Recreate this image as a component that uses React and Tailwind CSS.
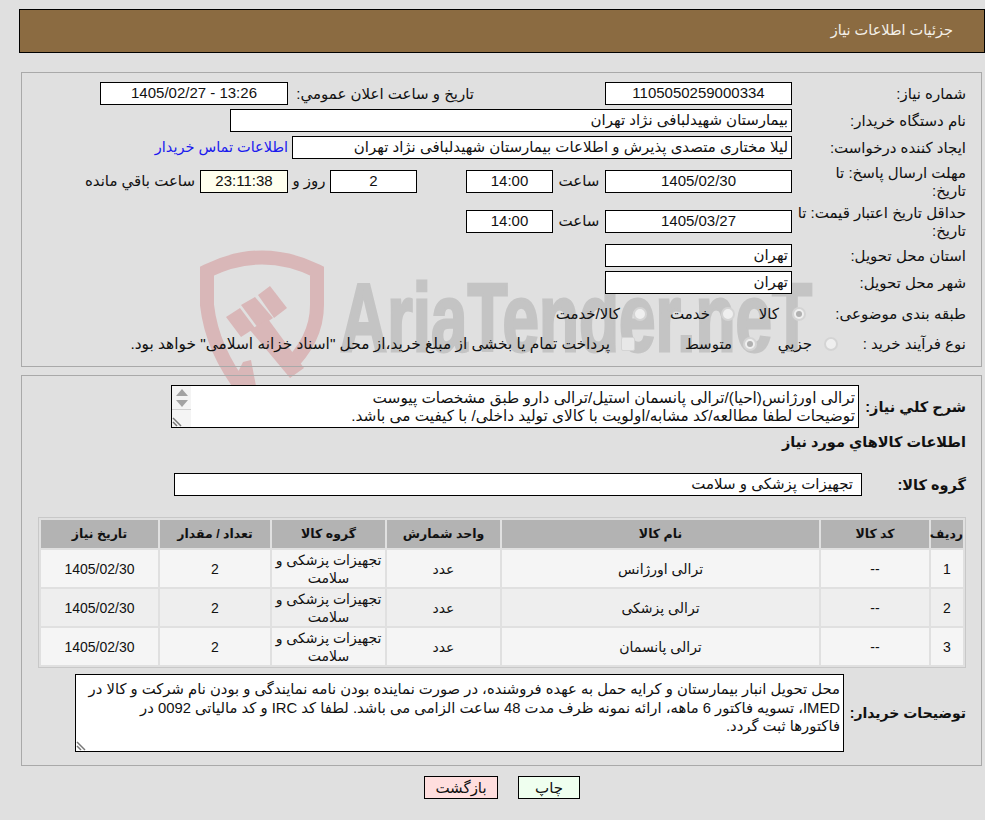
import React from "react";

const Box = ({ className = "", bg = "bg-white", children }) => (
  <div className={`h-full border border-black flex items-center shrink-0 ${bg} ${className}`}>{children}</div>
);

const Label = ({ className = "w-[174px]", children }) => (
  <div className={`shrink-0 leading-[18px] text-[#111] whitespace-nowrap ${className}`}>{children}</div>
);

const Row = ({ className = "", children }) => (
  <div className={`flex items-center h-[23px] ${className}`}>{children}</div>
);

const Radio = ({ on }) => (
  <span className="shrink-0 w-[14px] h-[14px] rounded-full border-2 border-[#d4d4d4] bg-[#efefef] flex items-center justify-center">
    {on && <span className="w-[6px] h-[6px] rounded-full bg-[#b0b0b0]" />}
  </span>
);

const Watermark = () => (
  <svg dir="ltr" className="absolute left-0 top-0 w-[985px] h-[820px]" viewBox="0 0 985 820" aria-hidden="true">
    <path
      d="M286 369 Q317 340 317 305 L317 271 Q262 244 207 271 L207 305 Q212 350 245 392"
      fill="none"
      stroke="#d9b7b8"
      strokeWidth="14"
    />
    <path d="M226 317 L240 308 L255 328 L241 337 Z" fill="#d9b7b8" />
    <path d="M241 305 L255 297 L273 318 L258 328 Z" fill="#d9b7b8" />
    <path d="M258 295 L270 286 L287 308 L274 318 Z" fill="#d9b7b8" />
    <path d="M250 330 L268 319 L304 368 L290 378 Z" fill="#d9b7b8" />
    <path d="M243 362 L251 360 L256 386 L232 384 Z" fill="#d9b7b8" />
    <text
      x="340"
      y="351"
      direction="ltr"
      fontFamily="'Liberation Sans', sans-serif"
      fontWeight="700"
      fontSize="96"
      fill="#c4c4c4"
      stroke="#c4c4c4"
      strokeWidth="3"
      textLength="472"
      lengthAdjust="spacingAndGlyphs"
    >
      AriaTender.neT
    </text>
  </svg>
);

const Th = ({ children }) => (
  <th className="bg-[#b3b3b3] h-[28px] p-0 text-center font-bold text-[12.5px] text-[#111]">{children}</th>
);
const Td = ({ bg, children }) => (
  <td className={`${bg} p-0 text-center text-[14px] leading-[18px] align-middle whitespace-nowrap`}>{children}</td>
);

const rows = [
  ["1", "ترالی اورژانس", "bg-[#f5f5f5]"],
  ["2", "ترالی پزشکی", "bg-[#eeeeee]"],
  ["3", "ترالی پانسمان", "bg-[#f5f5f5]"],
];

const Grip = ({ className }) => (
  <svg className={className} viewBox="0 0 12 12">
    <path d="M1 3 L9 11 M1 7 L5 11" stroke="#777" strokeWidth="1.5" />
  </svg>
);

export default function App() {
  return (
    <div
      dir="rtl"
      className="relative w-[985px] h-[820px] overflow-hidden bg-[#e0e0e0] text-[15px] text-[#111] font-['Liberation_Sans','DejaVu_Sans',sans-serif]"
    >
      <Watermark />
      <div className="relative">
        <div className="mt-[9px] ml-[19px] h-[44px] border border-black bg-[#8b6b41] flex items-center pr-[31px] text-[14.5px] text-[#f4f0e8]">
          جزئیات اطلاعات نیاز
        </div>

        <div className="mt-[19px] ml-[21px] mr-[3px] h-[295px] border border-[#a9a9a9] pr-[15px] pt-[9px]">
          <Row>
            <Label>شماره نیاز:</Label>
            <Box className="w-[187px] justify-center">1105050259000334</Box>
            <Label className="w-[186px] mr-[131px]">تاریخ و ساعت اعلان عمومي:</Label>
            <Box className="w-[188px] justify-center">13:26 - 1405/02/27</Box>
          </Row>
          <Row className="mt-[4px]">
            <Label>نام دستگاه خریدار:</Label>
            <Box className="w-[562px] pr-[3px]">بیمارستان شهیدلبافی نژاد تهران</Box>
          </Row>
          <Row className="mt-[4px]">
            <Label>ایجاد کننده درخواست:</Label>
            <Box className="w-[500px] pr-[3px]">لیلا مختاری متصدی پذیرش و اطلاعات بیمارستان شهیدلبافی نژاد تهران</Box>
            <a className="mr-[4px] text-[14.5px] text-[#1a1aee]">اطلاعات تماس خریدار</a>
          </Row>
          <Row className="mt-[11px]">
            <Label>
              مهلت ارسال پاسخ: تا
              <br />
              تاریخ:
            </Label>
            <Box className="w-[187px] justify-center">1405/02/30</Box>
            <span className="w-[52px] text-center">ساعت</span>
            <Box className="w-[87px] justify-center">14:00</Box>
            <Box className="w-[87px] justify-center mr-[49px]">2</Box>
            <span className="w-[42px] text-center">روز و</span>
            <Box bg="bg-[#ffffee]" className="w-[88px] justify-center">23:11:38</Box>
            <span className="mr-[5px]">ساعت باقي مانده</span>
          </Row>
          <Row className="mt-[17px]">
            <Label>
              حداقل تاریخ اعتبار قیمت: تا
              <br />
              تاریخ:
            </Label>
            <Box className="w-[187px] justify-center">1405/03/27</Box>
            <span className="w-[52px] text-center">ساعت</span>
            <Box className="w-[87px] justify-center">14:00</Box>
          </Row>
          <Row className="mt-[11px]">
            <Label>استان محل تحویل:</Label>
            <Box className="w-[187px] pr-[3px]">تهران</Box>
          </Row>
          <Row className="mt-[4px]">
            <Label>شهر محل تحویل:</Label>
            <Box className="w-[187px] pr-[3px]">تهران</Box>
          </Row>
          <Row className="mt-[7px] h-[26px]">
            <Label className="w-[160px]">طبقه بندی موضوعی:</Label>
            <div className="w-[71px] flex items-center gap-[13px]">
              <Radio on />
              <span>کالا</span>
            </div>
            <div className="w-[88px] flex items-center gap-[11px]">
              <Radio />
              <span>خدمت</span>
            </div>
            <div className="flex items-center gap-[13px]">
              <Radio />
              <span>کالا/خدمت</span>
            </div>
          </Row>
          <Row className="mt-[4px] h-[26px]">
            <Label className="w-[128px]">نوع فرآیند خرید :</Label>
            <div className="w-[81px] flex items-center gap-[12px]">
              <Radio />
              <span>جزيي</span>
            </div>
            <div className="w-[122px] flex items-center gap-[11px]">
              <Radio on />
              <span>متوسط</span>
            </div>
            <div className="flex items-center gap-[11px]">
              <span className="shrink-0 w-[14px] h-[14px] rounded-[2px] border border-[#d4d4d4] bg-[#e8e8e8]" />
              <span className="text-[15.4px]">پرداخت تمام یا بخشی از مبلغ خرید،از محل "اسناد خزانه اسلامی" خواهد بود.</span>
            </div>
          </Row>
        </div>

        <div className="mt-[8px] ml-[21px] mr-[3px] h-[391px] border border-[#a9a9a9] pr-[15px] pt-[9px]">
          <div className="flex items-center h-[43px]">
            <Label className="w-[107px] font-bold text-[14.5px]">شرح كلي نیاز:</Label>
            <div className="w-[688px] h-full border border-black bg-white flex justify-between overflow-hidden">
              <div className="pr-[3px] pt-[3px] leading-[18px] text-[15.3px]">
                <div>ترالی اورژانس(احیا)/ترالی پانسمان استیل/ترالی دارو طبق مشخصات پیوست</div>
                <div>توضیحات لطفا مطالعه/کد مشابه/اولویت با کالای تولید داخلی/ با کیفیت می باشد.</div>
              </div>
              <div dir="ltr" className="w-[19px] shrink-0 bg-[#f4f4f4] flex flex-col">
                <svg className="w-[19px] h-[23px] shrink-0" viewBox="0 0 19 23">
                  <path d="M4 10 L10 3 L16 10 Z" fill="#a3a3a3" />
                  <path d="M4 14 L16 14 L10 21 Z" fill="#a3a3a3" />
                </svg>
                <div className="h-px bg-[#d0d0d0]" />
                <Grip className="w-[12px] h-[12px] mt-auto" />
              </div>
            </div>
          </div>
          <div className="mt-[5px] h-[20px] flex items-center font-bold text-[14.5px]">اطلاعات كالاهاي مورد نیاز</div>
          <div className="mt-[20px] flex items-center h-[23px]">
            <Label className="w-[104px] font-bold text-[14.5px]">گروه کالا:</Label>
            <Box className="w-[688px] pr-[8px]">تجهیزات پزشکی و سلامت</Box>
          </div>
          <div className="mt-[21px] w-[928px] border border-[#c8c8c8]">
            <table className="w-[926px] table-fixed border-separate border-spacing-[2px]">
              <colgroup>
                <col className="w-[32px]" />
                <col className="w-[108px]" />
                <col className="w-[317px]" />
                <col className="w-[113px]" />
                <col className="w-[113px]" />
                <col className="w-[110px]" />
                <col />
              </colgroup>
              <thead>
                <tr>
                  <Th>ردیف</Th>
                  <Th>کد کالا</Th>
                  <Th>نام کالا</Th>
                  <Th>واحد شمارش</Th>
                  <Th>گروه کالا</Th>
                  <Th>تعداد / مقدار</Th>
                  <Th>تاریخ نیاز</Th>
                </tr>
              </thead>
              <tbody>
                {rows.map(([n, name, bg]) => (
                  <tr key={n} className="h-[37px]">
                    <Td bg={bg}>{n}</Td>
                    <Td bg={bg}>--</Td>
                    <Td bg={bg}>{name}</Td>
                    <Td bg={bg}>عدد</Td>
                    <Td bg={bg}>
                      تجهیزات پزشکی و
                      <br />
                      سلامت
                    </Td>
                    <Td bg={bg}>2</Td>
                    <Td bg={bg}>1405/02/30</Td>
                  </tr>
                ))}
              </tbody>
            </table>
          </div>
          <div className="mt-[6px] flex items-center h-[78px]">
            <Label className="w-[122px] font-bold text-[14px]">توضیحات خریدار:</Label>
            <div className="relative w-[769px] h-full border border-black bg-white px-[3px] pt-[5px] text-[14.8px] leading-[18.5px] whitespace-nowrap">
              محل تحویل انبار بیمارستان و کرایه حمل به عهده فروشنده، در صورت نماینده بودن نامه نمایندگی و بودن نام شرکت و کالا در
              <br />
              IMED، تسویه فاکتور 6 ماهه، ارائه نمونه ظرف مدت 48 ساعت الزامی می باشد. لطفا کد IRC و کد مالیاتی 0092 در
              <br />
              فاکتورها ثبت گردد.
              <Grip className="absolute left-0 bottom-0 w-[12px] h-[12px]" />
            </div>
          </div>
        </div>

        <div className="mt-[10px] h-[23px] flex justify-center gap-[20px] pl-[19px]">
          <button className="w-[62px] h-full border border-black bg-[#efffef] text-[#111]">چاپ</button>
          <button className="w-[74px] h-full border border-black bg-[#ffdede] text-[#111]">بازگشت</button>
        </div>
      </div>
    </div>
  );
}
